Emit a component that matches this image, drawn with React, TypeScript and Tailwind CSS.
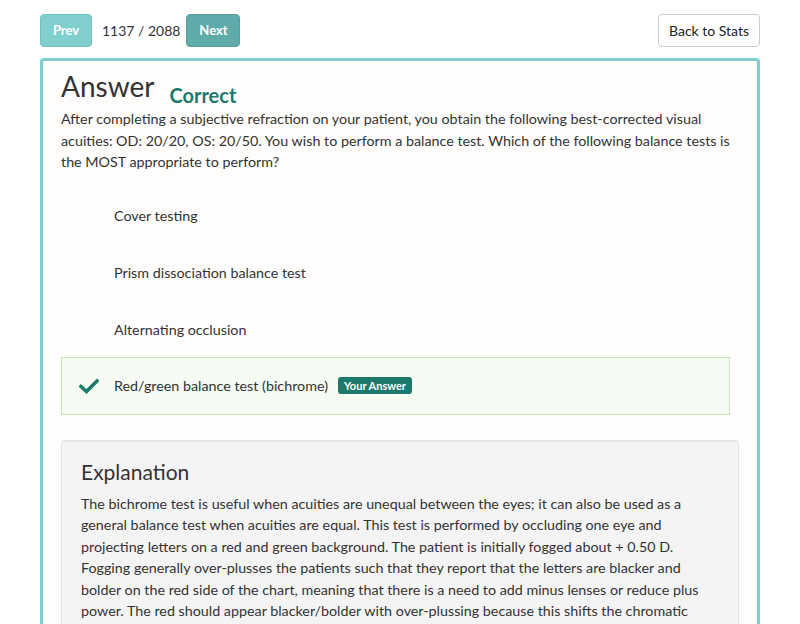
import React, { useState } from "react";

const options = [
  { id: 1, label: "Cover testing" },
  { id: 2, label: "Prism dissociation balance test" },
  { id: 3, label: "Alternating occlusion" },
  { id: 4, label: "Red/green balance test (bichrome)" },
];

const correctId = 4;
const selectedId = 4;

function CheckIcon() {
  return (
    <svg width="20" height="16" viewBox="0 0 20 16" className="shrink-0">
      <path
        d="M2 8.5 L7.5 13.5 L18 3"
        fill="none"
        stroke="#1b7a6a"
        strokeWidth="3.6"
        strokeLinecap="square"
      />
    </svg>
  );
}

export default function App() {
  const [current, setCurrent] = useState(1137);
  const total = 2088;

  return (
    <div
      className="min-h-screen bg-white text-[#333] pt-[14px] px-[40px]"
      style={{ fontFamily: "Lato, 'Open Sans', sans-serif" }}
    >
      <div className="flex items-center justify-between h-[33px]">
        <div className="flex items-center">
          <button
            onClick={() => setCurrent((c) => Math.max(1, c - 1))}
            className="h-[33px] w-[52px] rounded-[4px] bg-[#80cfcd] border border-[#72c2c0] text-white text-[13px] font-bold"
          >
            Prev
          </button>
          <span className="ml-[10px] text-[14px] text-[#333]">
            {current} / {total}
          </span>
          <button
            onClick={() => setCurrent((c) => Math.min(total, c + 1))}
            className="ml-[6px] h-[33px] w-[54px] rounded-[4px] bg-[#5fabaa] border border-[#579f9e] text-white text-[13px] font-bold"
          >
            Next
          </button>
        </div>
        <button className="h-[33px] w-[102px] rounded-[4px] bg-white border border-[#cccccc] text-[14px] text-[#222]">
          Back to Stats
        </button>
      </div>

      <div className="mt-[11px] border-[3px] border-[#7ecfcd] rounded-t-[4px] bg-[#fefdfb] px-[18px] pt-[7px] pb-[40px]">
        <div className="flex items-start">
          <h1 className="text-[28px] leading-[36px] text-[#333] font-normal">
            Answer
          </h1>
          <span className="ml-[15px] mt-[15px] text-[20px] leading-[24px] font-bold text-[#1b7a6a]">
            Correct
          </span>
        </div>
        <p className="mt-[1px] text-[14.3px] leading-[21.5px] text-[#333]">
          After completing a subjective refraction on your patient, you obtain
          the following best-corrected visual acuities: OD: 20/20, OS: 20/50.
          You wish to perform a balance test. Which of the following balance
          tests is the MOST appropriate to perform?
        </p>

        <div className="mt-[15px] mr-[9px] flex flex-col">
          {options.map((o) => {
            const isCorrect = o.id === correctId;
            return (
              <div
                key={o.id}
                className={`flex items-center pl-[17px] border ${
                  isCorrect
                    ? "h-[58px] -mt-[2px] bg-[#f5faf3] border-[#c6e5bd]"
                    : "h-[57px] border-transparent"
                }`}
              >
                <div className="w-[20px] flex items-center">
                  {isCorrect && <CheckIcon />}
                </div>
                <span className="ml-[15px] text-[14.3px] text-[#333]">
                  {o.label}
                </span>
                {o.id === selectedId && (
                  <span className="ml-[10px] h-[17px] px-[6px] rounded-[3px] bg-[#1b7a6a] text-white text-[11px] font-bold leading-[17px]">
                    Your Answer
                  </span>
                )}
              </div>
            );
          })}
        </div>

        <div className="mt-[25px] rounded-[4px] border border-[#e3e3e3] bg-[#f4f4f4] shadow-[inset_0_1px_1px_rgba(0,0,0,0.05)] px-[19px] pt-[19px] pb-[20px]">
          <h2 className="text-[21px] leading-[24px] text-[#333] font-normal">
            Explanation
          </h2>
          <p className="mt-[9px] text-[14.3px] leading-[21.6px] text-[#333]">
            The bichrome test is useful when acuities are unequal between the
            eyes; it can also be used as a general balance test when acuities
            are equal. This test is performed by occluding one eye and
            projecting letters on a red and green background. The patient is
            initially fogged about + 0.50 D. Fogging generally over-plusses the
            patients such that they report that the letters are blacker and
            bolder on the red side of the chart, meaning that there is a need
            to add minus lenses or reduce plus power. The red should appear
            blacker/bolder with over-plussing because this shifts the chromatic
            interval forward, moving this wavelength closer to the retina while
            the green moves further away from it.
          </p>
        </div>
      </div>
    </div>
  );
}
